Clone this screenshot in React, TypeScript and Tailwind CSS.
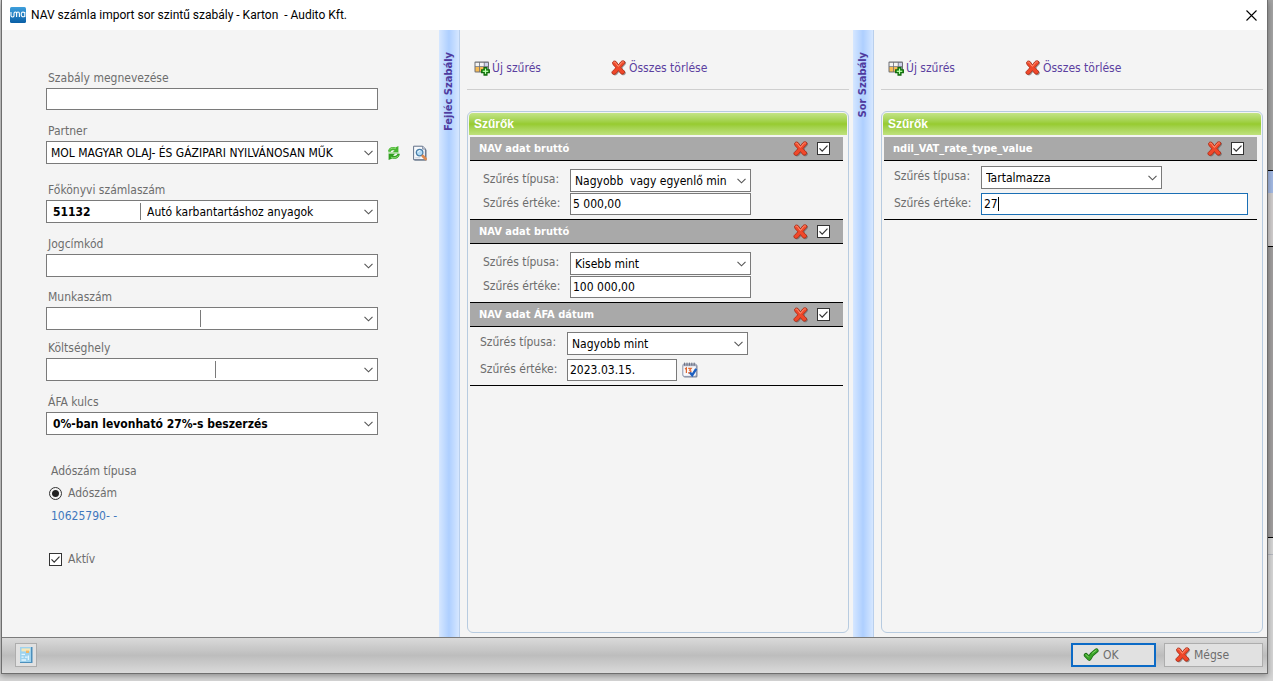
import { useState } from 'react';
import type { ReactNode } from 'react';

const boxClass = 'border border-[#7a7a7a] bg-white text-black';

function Chevron() {
  return (
    <svg viewBox="0 0 9 6" className="pointer-events-none absolute right-1 top-2 h-1.5 w-[9px]" fill="none" stroke="#555" strokeWidth="1.1">
      <path d="M0.5 0.8 4.5 4.8 8.5 0.8" />
    </svg>
  );
}

function RedX() {
  return (
    <svg viewBox="0 0 16 16" className="size-4 shrink-0" strokeLinejoin="round">
      <path
        d="M2.6 2.4C4.2.8 5.8 1.2 6.6 3.2L8.4 5.6 10.6 2.6C12 .8 14.6 1 15.2 3 15 5 12.6 6 11.2 8.4 12.2 10 14.4 11.2 15 13 14.2 15.4 12 16 10.6 14.4L8.4 11.6 6.2 14.4C4.6 16 2 15.6 1.4 13.6 1.4 11.6 4.4 10.4 5.6 8.6 4.6 6.6 2 5.2 2.6 2.4z"
        fill="#5a5a5a"
        fillOpacity=".55"
      />
      <path
        d="M1.6 2.2C2.8.4 4.8.6 5.8 2.6L7.5 5 9.6 2C11 .2 13.4.4 14 2.2 14 4 11.6 5.2 10 7.6 11.2 9.4 13.4 10.4 13.8 12.2 13.2 14.2 11 14.8 9.6 13.4L7.4 10.6 5.2 13.4C3.6 15 1.4 14.6.8 12.8.8 10.8 3.6 9.8 4.8 7.8 3.6 5.8 1 4.6 1.6 2.2z"
        fill="#f0482a"
        stroke="#a52814"
        strokeWidth="0.8"
      />
      <path d="M2.6 2.6C3.4 1.8 4.4 2 5 3.4L7.4 6.4 10.4 2.8C11.2 1.8 12.2 1.6 12.8 2.2" fill="none" stroke="#ff9a7a" strokeWidth="1" />
    </svg>
  );
}

function GreenCheck() {
  return (
    <svg viewBox="0 0 16 16" className="size-4 shrink-0" strokeLinecap="round" strokeLinejoin="round" fill="none">
      <path d="M3 8.2 6.2 11.6C8 8.2 10.2 5.6 13.4 3.6" stroke="#1d6b16" strokeWidth="4.4" />
      <path d="M3 8.2 6.2 11.6C8 8.2 10.2 5.6 13.4 3.6" stroke="#3aa329" strokeWidth="2.9" />
      <path d="M3 7.6 5.4 10M9.6 6 13 3.4" stroke="#8bdc6f" strokeWidth="0.9" />
    </svg>
  );
}

function TableAdd() {
  return (
    <svg viewBox="0 0 16 16" className="size-4 shrink-0">
      <rect x="0.5" y="1.6" width="14.5" height="11" rx="1" fill="#6f7076" />
      <path d="M1.5 2.8h3.7v3.4H1.5zM6 2.8h3.8v3.4H6z" fill="#f4f4f4" />
      <path d="M10.6 2.8H14v3.4h-3.4z" fill="#cfd3ec" />
      <path d="M1.5 7h3.7v4.4H1.5zM6 7h3.8v4.4H6z" fill="#f6bb55" />
      <path d="M10.6 7H14v4.4h-3.4z" fill="#d6dae8" />
      <path d="M10.1 7.6h2.8v2.3h2.4v2.8h-2.4V15h-2.8v-2.3H7.7V9.9h2.4z" fill="#4ad137" stroke="#12690e" strokeWidth="1.3" />
      <path d="M11.5 8.8v5M9 11.3h5" stroke="#c9ffba" strokeWidth="1" />
    </svg>
  );
}

function Refresh() {
  return (
    <svg viewBox="0 0 16 16" className="size-4">
      <path d="M2 6.6C2.2 3.4 5.4 1 9.4 2.4L12.4 1V7.2H6.4L8.6 5.4C6.8 4.8 4.8 5.2 4.6 7z" fill="#46b52f" />
      <path d="M13.8 8.8C13.6 12.4 10.4 14.8 6.2 13.4L2.6 15V8.8H9.2L7 10.6C9 11.3 11 10.8 11.4 8.8z" fill="#2f9f1e" />
      <path d="M2.2 7.2H12.6V8.8H2.4z" fill="#62c448" fillOpacity=".5" />
      <path d="M3.4 5C4.6 3.2 7.4 2.6 9.8 3.6M4.8 12.2C7.4 13.2 10.8 12.9 12.4 10.6" stroke="#93dc7c" strokeWidth="0.9" fill="none" />
    </svg>
  );
}

function Preview() {
  return (
    <svg viewBox="0 0 16 16" className="size-4">
      <path d="M2.4 1.5h9l3.2 3.4V15.8H2.4z" fill="#7d8a9b" />
      <path d="M1.6 1.2h9l2.8 2.9v10.6H1.6z" fill="#f7f9fc" stroke="#65738a" strokeWidth="1" />
      <path d="M10.6 1.2v2.9h2.8" fill="#c9d3e0" stroke="#65738a" strokeWidth="0.7" />
      <path d="M3.2 12.8h5" stroke="#c6cdd8" />
      <circle cx="7.6" cy="7.6" r="3.3" fill="#b4dcf6" stroke="#4a7ea8" strokeWidth="1.3" />
      <path d="M6 7.2C6.2 6.1 7.2 5.5 8.2 5.7" stroke="#fff" strokeWidth="0.9" fill="none" />
      <path d="M10.8 11 13.6 13.9" stroke="#e08a4e" strokeWidth="2.8" strokeLinecap="round" />
    </svg>
  );
}

function Calendar() {
  return (
    <svg viewBox="0 0 16 16" className="size-4">
      <rect x="1.5" y="2.4" width="14" height="13" rx="1.5" fill="#7e8699" />
      <rect x="0.8" y="2" width="13.6" height="12.4" rx="1.4" fill="#f7f7fa" stroke="#8c94ab" />
      <path d="M1.2 2h12.8v2.2H1.2z" fill="#a5abbc" />
      <path d="M2.6.6v3M5 .6v3M7.4.6v3M9.8.6v3M12.2.6v3" stroke="#5d6476" strokeWidth="0.9" />
      <path d="M3 7 4.4 6v5M6.2 6.4h3L7.6 8.2 9 9.2 7.6 10.8H6" stroke="#e0652f" strokeWidth="1.2" fill="none" />
      <path d="M8 10.4 10.2 13.2 14.2 6.8" stroke="#1c5fc0" strokeWidth="2.4" fill="none" />
    </svg>
  );
}

function Calculator() {
  return (
    <svg viewBox="0 0 14 18" className="h-[18px] w-3.5">
      <rect x="1" y="1" width="12.5" height="16" fill="#4d8fbb" />
      <rect x="1" y="1" width="11" height="15" fill="#9dd2ee" />
      <rect x="2.5" y="2.4" width="8.6" height="3" fill="#f4e6b8" />
      <rect x="7" y="4.6" width="3" height="2.4" fill="#f0b766" />
      <path d="M2.5 8.4H6M2.5 11.2H4.6M2.5 14H7M6 11.2H8.4M9.4 9.6V14" stroke="#e4f6ff" strokeWidth="1.3" />
    </svg>
  );
}

function Logo() {
  return (
    <svg viewBox="0 0 16 16" className="size-4">
      <defs>
        <linearGradient id="logo" x1="0" y1="0" x2="0" y2="1">
          <stop offset="0" stopColor="#3e9fdc" />
          <stop offset="1" stopColor="#0a5fa6" />
        </linearGradient>
      </defs>
      <rect width="16" height="16" rx="1.5" fill="url(#logo)" />
      <path
        d="M1 5V8.4Q1 10 2.6 10 3.6 10 4 9V6.4Q4 5 5.4 5 6.6 5 6.6 6.4V10M6.6 6.4Q6.8 5 8 5 9.4 5 9.4 6.4V10M14.6 5.4Q11.2 4.2 11.2 7.5 11.2 10.6 14.6 9.4M14.8 5V10"
        fill="none"
        stroke="#fff"
        strokeWidth="1.1"
      />
    </svg>
  );
}

function Check({ id, label }: { id: string; label?: string }) {
  const [on, setOn] = useState(true);
  return (
    <span className="relative size-[13px] shrink-0">
      <input
        id={id}
        type="checkbox"
        aria-label={label}
        checked={on}
        onChange={() => setOn(!on)}
        className="block size-[13px] appearance-none border border-[#333] bg-white"
      />
      {on && (
        <svg viewBox="0 0 13 13" className="pointer-events-none absolute inset-0 size-[13px]" fill="none" stroke="#333" strokeWidth="1.2">
          <path d="M2.5 6.4 5.2 9.2 10.5 3.6" />
        </svg>
      )}
    </span>
  );
}

type ComboProps = { id: string; value?: string; code?: string; codeWidth?: string; bold?: boolean; pad?: string };

function Combo({ id, value = '', code, codeWidth, bold, pad = 'pl-1' }: ComboProps) {
  return (
    <div className={`relative flex h-[23px] items-center ${boxClass}`}>
      {codeWidth && (
        <input
          aria-label={`${id} kód`}
          defaultValue={code}
          className={`h-[17px] border-r border-[#7a7a7a] pl-1.5 font-bold outline-none ${codeWidth}`}
        />
      )}
      <select id={id} className={`h-full min-w-0 flex-1 appearance-none pr-5 leading-5 outline-none ${pad} ${bold ? 'font-bold' : ''}`}>
        <option>{value}</option>
      </select>
      <Chevron />
    </div>
  );
}

function Field({ id, label, className = '', children }: { id: string; label: string; className?: string; children: ReactNode }) {
  return (
    <div className={className}>
      <label htmlFor={id} className="block pl-0.5 leading-5">{label}</label>
      {children}
    </div>
  );
}

type Filter = { id: string; title: string; type: string; value: string; kind: 'number' | 'date' | 'text' };

const headerFilters: Filter[] = [
  { id: 'h1', title: 'NAV adat bruttó', type: 'Nagyobb \u00a0vagy egyenlő min', value: '5 000,00', kind: 'number' },
  { id: 'h2', title: 'NAV adat bruttó', type: 'Kisebb mint', value: '100 000,00', kind: 'number' },
  { id: 'h3', title: 'NAV adat ÁFA dátum', type: 'Nagyobb mint', value: '2023.03.15.', kind: 'date' },
];

const rowFilters: Filter[] = [
  { id: 'r1', title: 'ndil_VAT_rate_type_value', type: 'Tartalmazza', value: '27', kind: 'text' },
];

function FilterCard({ filter, first }: { filter: Filter; first: boolean }) {
  const { id, title, type, value, kind } = filter;
  const dense = kind === 'number';
  return (
    <section>
      <div className={`flex items-center border-b border-black bg-[#a9a9a9] pl-[9px] pr-[13px] ${first ? 'h-6' : 'h-[25px] border-t'}`}>
        <h3 className="flex-1 text-[11px] font-bold leading-[17px] text-white">{title}</h3>
        <button type="button" aria-label="Törlés" className="mr-2"><RedX /></button>
        <Check id={`${id}-on`} label={title} />
      </div>
      <div className={`flex flex-col pb-1 pr-[9px] ${dense ? 'gap-px pl-[13px] pt-2' : 'gap-1 pl-2.5 pt-[5px]'}`}>
        <div className="flex">
          <label htmlFor={`${id}-type`} className="w-[87px] shrink-0 leading-5">Szűrés típusa:</label>
          <div className="w-[181px]"><Combo id={`${id}-type`} value={type} /></div>
        </div>
        <div className="flex">
          <label htmlFor={`${id}-value`} className="w-[87px] shrink-0 leading-5">Szűrés értéke:</label>
          {kind === 'text' ? (
            <div className="relative flex-1">
              <input id={`${id}-value`} defaultValue={value} className="block h-[22px] w-full border border-[#1a6fb5] bg-white pl-0.5 text-black outline-none" />
              <span className="absolute left-[17px] top-1 h-3.5 w-px bg-black" />
            </div>
          ) : (
            <input id={`${id}-value`} defaultValue={value} className={`h-[22px] pl-0.5 ${boxClass} ${kind === 'date' ? 'w-[110px]' : 'w-[181px]'}`} />
          )}
          {kind === 'date' && <button type="button" aria-label="Naptár" className="ml-[5px]"><Calendar /></button>}
        </div>
      </div>
    </section>
  );
}

function FilterPanel({ filters }: { filters: Filter[] }) {
  return (
    <div className="flex min-w-0 flex-col pb-1 pl-[7px] pr-1">
      <div className="flex h-[60px] items-center border-b border-[#cfcfcf] pl-[7px] pt-4 text-[#5b3fa0]">
        <button type="button" className="flex w-[137px] items-center gap-0.5"><TableAdd />Új szűrés</button>
        <button type="button" className="flex items-center gap-0.5"><RedX />Összes törlése</button>
      </div>
      <div className="mt-[21px] flex-1 rounded-md border border-[#b7cbe0] p-px">
        <h2 className="h-[22px] rounded-t bg-linear-to-b from-[#c3e485] via-[#97cb2f] to-[#bfe27c] pl-[5px] font-['Liberation_Sans'] font-bold leading-[22px] text-white">
          Szűrők
        </h2>
        <div className="ml-px mr-1 mt-0.5 border-b border-black">
          {filters.map((f, i) => <FilterCard key={f.id} filter={f} first={i === 0} />)}
        </div>
      </div>
    </div>
  );
}

function SideTab({ title }: { title: string }) {
  return (
    <div className="flex justify-center border-r border-[#b9cfec] bg-linear-to-r from-[#d6e7ff] via-[#aecfff] to-[#d6e7ff] pt-[22px]">
      <span className="h-fit rotate-180 text-[11px] font-bold leading-4 text-[#4f3a9e] [writing-mode:vertical-rl]">{title}</span>
    </div>
  );
}

export default function App() {
  return (
    <div className="flex h-screen bg-[#d6d6d6] pb-[7px] pl-px font-['DejaVu_Sans_Condensed','DejaVu_Sans',sans-serif] text-[12px] text-[#6d6d6d]">
      <main className="z-10 flex min-w-0 flex-1 flex-col border-x border-b border-[#6e6e6e] bg-[#f4f4f4] shadow-[0_2px_6px_rgba(0,0,0,0.35)]">
        <header className="flex h-[30px] shrink-0 items-center bg-white pl-2 pr-2.5">
          <Logo />
          <h1 className="ml-[5px] flex-1 whitespace-pre font-['Roboto'] text-[12px] text-black">NAV számla import sor szintű szabály - Karton  - Audito Kft.</h1>
          <button type="button" aria-label="Bezárás">
            <svg viewBox="0 0 11 11" className="size-[11px]" stroke="#000" strokeWidth="1.1"><path d="M.5.5l10 10M10.5.5l-10 10" /></svg>
          </button>
        </header>

        <div className="grid min-h-0 flex-1 grid-cols-[437px_21px_1fr_21px_1fr]">
          <form className="pl-11 pt-[38px]">
            <div className="w-[332px]">
              <Field id="nev" label="Szabály megnevezése">
                <input id="nev" className={`block h-[22px] w-full px-1 ${boxClass}`} />
              </Field>
            </div>
            <div className="mt-[11px] flex items-end">
              <Field id="partner" label="Partner" className="w-[332px]">
                <Combo id="partner" value="MOL MAGYAR OLAJ- ÉS GÁZIPARI NYILVÁNOSAN MŰK" />
              </Field>
              <button type="button" aria-label="Frissítés" className="mb-[3px] ml-2"><Refresh /></button>
              <button type="button" aria-label="Megtekintés" className="mb-[3px] ml-2.5"><Preview /></button>
            </div>
            <div className="w-[332px]">
              <Field id="fokonyv" label="Főkönyvi számlaszám" className="mt-4">
                <Combo id="fokonyv" code="51132" codeWidth="w-[94px]" value="Autó karbantartáshoz anyagok" pad="pl-1.5" />
              </Field>
              <Field id="jogcim" label="Jogcímkód" className="mt-[11px]"><Combo id="jogcim" /></Field>
              <Field id="munkaszam" label="Munkaszám" className="mt-2.5"><Combo id="munkaszam" codeWidth="w-[154px]" /></Field>
              <Field id="koltseghely" label="Költséghely" className="mt-2"><Combo id="koltseghely" codeWidth="w-[169px]" /></Field>
              <Field id="afa" label="ÁFA kulcs" className="mt-[11px]">
                <Combo id="afa" value="0%-ban levonható 27%-s beszerzés" bold pad="pl-1.5" />
              </Field>
            </div>
            <fieldset className="mt-[26px] leading-5">
              <legend className="pl-[5px]">Adószám típusa</legend>
              <div className="mt-0.5 flex items-center gap-1.5 pl-[3px]">
                <input
                  id="adoszam"
                  type="radio"
                  name="adotipus"
                  defaultChecked
                  className="size-[13px] appearance-none rounded-full border border-[#333] bg-white bg-radial from-[#222] from-45% to-white to-55% bg-clip-content p-0.5"
                />
                <label htmlFor="adoszam">Adószám</label>
              </div>
              <p className="mt-[3px] pl-[5px] text-[#3f78bd]">10625790- -</p>
            </fieldset>
            <div className="mt-[23px] flex items-center gap-1.5 pl-[3px] leading-5">
              <Check id="aktiv" />
              <label htmlFor="aktiv">Aktív</label>
            </div>
          </form>
          <SideTab title="Fejléc Szabály" />
          <FilterPanel filters={headerFilters} />
          <SideTab title="Sor Szabály" />
          <FilterPanel filters={rowFilters} />
        </div>

        <footer className="flex h-9 shrink-0 items-center border-t border-[#7b7b7b] bg-linear-to-b from-[#dadada] via-[#bdbdbd] to-[#dadada] pb-px pl-[13px] pr-1">
          <button type="button" aria-label="Számológép" className="flex h-6 w-[22px] items-center justify-center border border-[#adadad] bg-[#e1e1e1]"><Calculator /></button>
          <button type="button" className="ml-auto flex h-6 w-[85px] items-center gap-1 border-2 border-[#0b6ac6] bg-[#e1e1e1] pl-2.5"><GreenCheck />OK</button>
          <button type="button" className="ml-2 flex h-6 w-[99px] items-center gap-[3px] border border-[#adadad] bg-[#e1e1e1] pl-2.5"><RedX />Mégse</button>
        </footer>
      </main>
      {/* slice of the window behind the dialog */}
      <aside className="flex w-[5px] shrink-0 flex-col">
        <div className="h-[171px] border-b border-black bg-[#a3a3a3]" />
        <div className="h-[22px] bg-[#a3b9e3]" />
        <div className="h-[53px] bg-[#cfcccc]" />
        <div className="h-[292px] border-y border-black bg-[#a09e9e]" />
        <div className="h-[17px] border-b border-[#b5b8c0]" />
      </aside>
    </div>
  );
}
